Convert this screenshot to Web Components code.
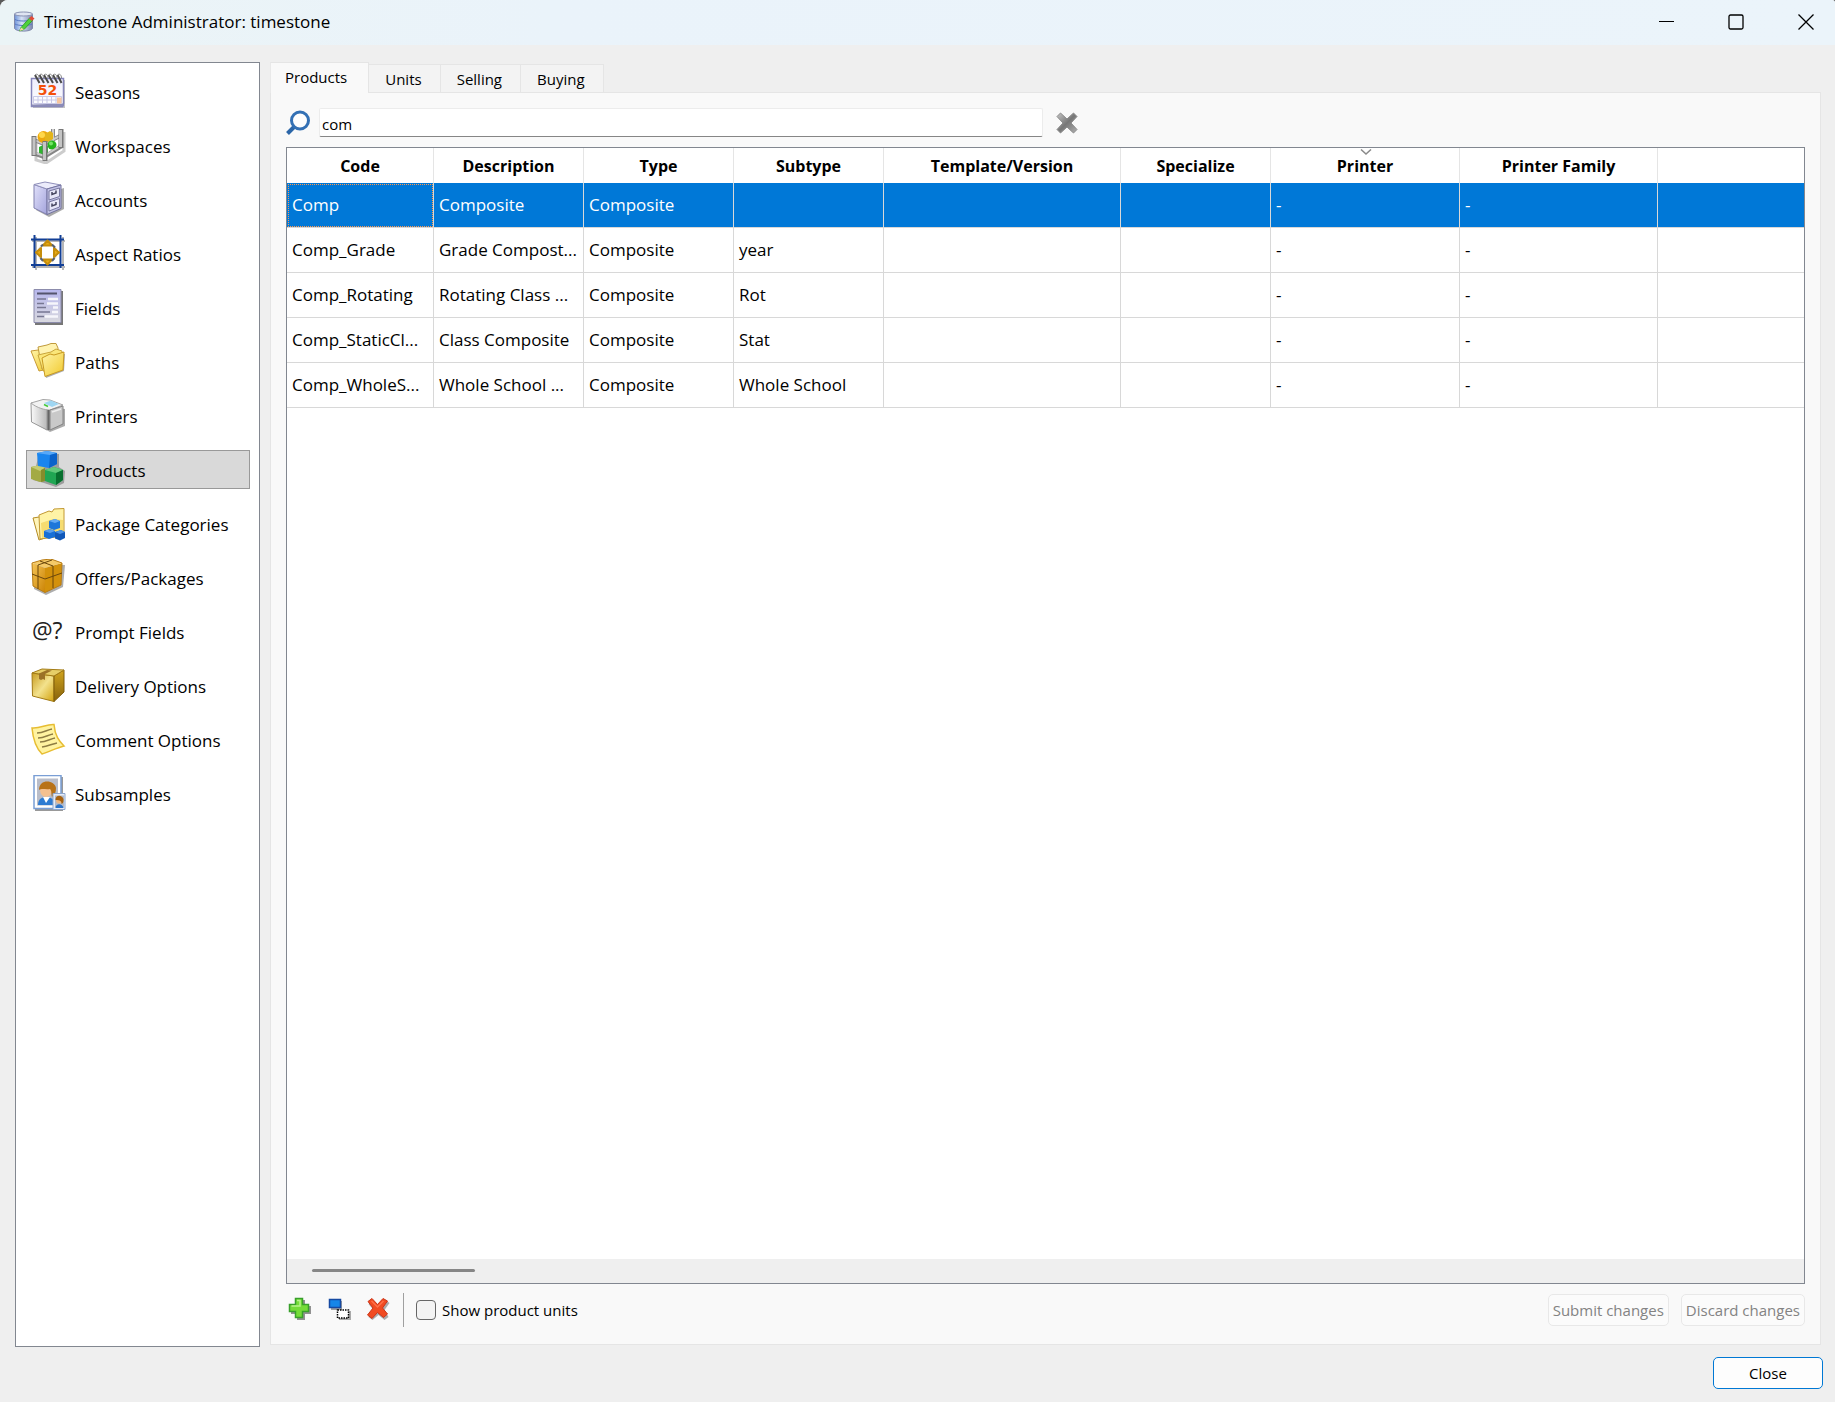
<!DOCTYPE html>
<html lang="en">
<head>
<meta charset="utf-8">
<title>Timestone Administrator: timestone</title>
<style>
    body {
        margin: 0;
        background: #5a5a5a;
        color: #000;
        font-family: "Open Sans", "Noto Sans", sans-serif;
        font-size: 17px;
    }
</style>
</head>
<body>

<admin-window>
    <title-bar slot="title">Timestone Administrator: timestone</title-bar>

    <nav-list slot="nav">
        <nav-item icon="seasons">Seasons</nav-item>
        <nav-item icon="workspaces">Workspaces</nav-item>
        <nav-item icon="accounts">Accounts</nav-item>
        <nav-item icon="aspect">Aspect Ratios</nav-item>
        <nav-item icon="fields">Fields</nav-item>
        <nav-item icon="paths">Paths</nav-item>
        <nav-item icon="printers">Printers</nav-item>
        <nav-item icon="products" selected>Products</nav-item>
        <nav-item icon="categories">Package Categories</nav-item>
        <nav-item icon="offers">Offers/Packages</nav-item>
        <nav-item icon="prompt">Prompt Fields</nav-item>
        <nav-item icon="delivery">Delivery Options</nav-item>
        <nav-item icon="comment">Comment Options</nav-item>
        <nav-item icon="subsamples">Subsamples</nav-item>
    </nav-list>

    <tab-panel tabs="Products,Units,Selling,Buying">
        <search-box value="com"></search-box>
        <product-table></product-table>
        <tool-bar></tool-bar>
    </tab-panel>

    <push-button slot="footer" variant="default">Close</push-button>
</admin-window>

<script>
const ICONS = {
    app: `<svg viewBox="0 0 22 22">
        <defs><linearGradient id="a" x2="1"><stop stop-color="#6f93d8"/><stop offset=".4" stop-color="#d5e2f6"/><stop offset="1" stop-color="#7b86ad"/></linearGradient></defs>
        <path d="M1.500 3v14.500c2 3.500 16 3.500 18 0V3z" fill="url(#a)" stroke="#8089ac"/>
        <ellipse cx="10.500" cy="3" rx="9" ry="2" fill="#dfe5f2" stroke="#8a92b2"/>
        <path d="M2 8.500c3 2 14 2 17 0M2 13c3 2 14 2 17 0" fill="none" stroke="#5577c4"/>
        <path d="M8 16.500L17 6.500l3 2.500-9 9.500-4.500 1.500z" fill="#4fd03c" stroke="#279a1e" stroke-width=".8"/>
        <path d="M16 7.500l2.500-2.500 3 2.500L19 10z" fill="#e34b38"/>
        <path d="M8 16.500l3 2-4.500 1.500z" fill="#f3d9a4"/></svg>`,
    seasons: `<svg viewBox="0 0 37 37">
        <defs><linearGradient id="a" x2="0" y2="1"><stop stop-color="#eeeefd"/><stop offset="1" stop-color="#fff"/></linearGradient></defs>
        <path d="M3 7h32v28H3z" fill="#aaa" opacity=".7"/>
        <path d="M1.500 5.500h32V30c0 2 0 3-1 3.500H1.500z" fill="url(#a)" stroke="#8585ba" stroke-width="1.500"/>
        <path d="M2 31.500l31-1v3H2z" fill="#8c8cb8"/>
        <path d="M3.500 23.500h28v7h-28zM3.500 27h28M8 23.500v7M12.500 23.500v7M17 23.500v7M21.500 23.500v7M26 23.500v7" fill="none" stroke="#c9c9e6"/>
        <path d="M27 24.500h4.500v6H27z" fill="#f8c59c"/>
        <path d="M5 2l4.500 8M9.500 2l4.500 8M14 2l4.500 8M18.500 2l4.500 8M23 2l4.500 8M27.500 2l4 8" stroke="#4a4a4a" stroke-width="2"/>
        <path d="M5 2c2-2 4 0 4 3M9.500 2c2-2 4 0 4 3M14 2c2-2 4 0 4 3M18.500 2c2-2 4 0 4 3M23 2c2-2 4 0 4 3M27.500 2c2-2 4 0 4 3" fill="none" stroke="#888"/>
        <text x="17.500" y="22" text-anchor="middle" font-family="DejaVu Sans, sans-serif" font-weight="700" font-size="14" fill="#f4500a">52</text></svg>`,
    workspaces: `<svg viewBox="0 0 37 37">
        <path d="M6 13v20l10 3 18-12V5" fill="none" stroke="#999" stroke-width="3" opacity=".5"/>
        <path d="M23 2v12M4 13l10 4 18-9" fill="none" stroke="#8a8a8a" stroke-width="4"/>
        <path d="M23 2v12M4 13l10 4 18-9" fill="none" stroke="#cdcdcd" stroke-width="2"/>
        <circle cx="13.500" cy="10" r="6" fill="#eda90c"/><circle cx="12" cy="8" r="3" fill="#ffd84a"/>
        <path d="M15 7l5-3 3 2v6l-5 3-3-2z" fill="#e3b51c"/>
        <path d="M9 20l6-3 3 2v7l-5 3-4-2z" fill="#2fb52f"/>
        <circle cx="22" cy="18" r="4.500" fill="#24b41c"/><circle cx="21" cy="16.500" r="2" fill="#74e566"/>
        <path d="M3 26l11 4 18-11" fill="none" stroke="#868686" stroke-width="4"/>
        <path d="M3 25l11 4 18-11" fill="none" stroke="#cbcbcb" stroke-width="2"/>
        <path d="M4 9v20M15 14v20M31 2v19" stroke="#777" stroke-width="5"/>
        <path d="M4 10v18M14.500 15v18M30.500 3v17" stroke="#c4c4c4" stroke-width="3"/></svg>`,
    accounts: `<svg viewBox="0 0 37 37">
        <defs><linearGradient id="a" x2="1" y2="1"><stop stop-color="#e1e1fa"/><stop offset="1" stop-color="#a3a3dc"/></linearGradient></defs>
        <path d="M18 12l16-5v21L19 36 6 29z" fill="#888" opacity=".7"/>
        <path d="M4 3.500L17 8v25.500L4 27z" fill="url(#a)" stroke="#8080ae"/>
        <path d="M4 3.500L15 1l16 3-14 4z" fill="#ececfb" stroke="#9090ba"/>
        <path d="M17 8l14-4v23.500l-14 6z" fill="#c1c1e5" stroke="#72729e"/>
        <path d="M19 10l10.500-3v8.500L19 19zM19 21l10.500-3.500v8.500L19 30z" fill="#e7e7f8" stroke="#77779f"/>
        <path d="M22 11v2.500l4-1.500V9.500M22 22.500V25l4-1.500V21" fill="none" stroke="#44445d" stroke-width="1.500"/></svg>`,
    aspect: `<svg viewBox="0 0 37 37">
        <path d="M6 2v33M33 2v33M2 6h33M2 32h33" stroke="#999" stroke-width="2" opacity=".7"/>
        <path d="M4.500 0v33M30.500 0v33M1 4.500h33M1 30h33" stroke="#123f96" stroke-width="2"/>
        <circle cx="17.500" cy="17.500" r="9" fill="none" stroke="#d7dbe5" stroke-width="2"/>
        <path d="M17.500 5.500l4.500 5h-9zM17.500 29.500l4.500-5h-9zM6 17.500L11 13v9zM29 17.500L24 13v9z" fill="#e9ab13" stroke="#c58d0b" stroke-width="2" stroke-linejoin="round"/>
        <path d="M11 11.500l2-2M22 9.500l3 3M24.500 23l-2.500 3M13 26l-2.500-3" stroke="#59616e" stroke-width="2"/></svg>`,
    fields: `<svg viewBox="0 0 37 37">
        <defs><linearGradient id="a" x2="0" y2="1"><stop stop-color="#b7b7ed"/><stop offset="1" stop-color="#d9d9df"/></linearGradient></defs>
        <path d="M5 2h28v34H5z" fill="#777"/>
        <path d="M4 .500h27v33H4z" fill="url(#a)" stroke="#8c8cac"/>
        <path d="M7 4.500h20" stroke="#54546d" stroke-width="2"/>
        <path d="M7 10h9M7 14.500h7M7 18.500h9M7 23h13M7 27.500h7" stroke="#777792" stroke-width="1.500"/>
        <path d="M18 10h10M17 14.500h11M23 18.500h5M22 23h6M15 27.500h13" stroke="#f6f6fb" stroke-width="2.500"/></svg>`,
    paths: `<svg viewBox="0 0 37 37">
        <defs><linearGradient id="a" x2="1" y2="1"><stop stop-color="#fff5ab"/><stop offset="1" stop-color="#f1c92c"/></linearGradient></defs>
        <path d="M12 12l23-1-1 17-18 7z" fill="#777" opacity=".6"/>
        <path d="M1 8l7-1 4 2 4-1 2 18-9 2z" fill="url(#a)" stroke="#c89a35"/>
        <path d="M8 4l9-2 4-1.500h5L28 5v20l-16 1z" fill="#fff3b0" stroke="#c09a3c"/>
        <path d="M8 12l13-3 5-3 6 2-1 16-18 4z" fill="#fae679" stroke="#c9a53c"/>
        <path d="M12 15l8-4 4 1 10-3-1 18-18 6.500z" fill="url(#a)" stroke="#c99a20"/></svg>`,
    printers: `<svg viewBox="0 0 37 37">
        <defs><linearGradient id="a" x2="1"><stop stop-color="#fafafa"/><stop offset="1" stop-color="#b9b9b9"/></linearGradient></defs>
        <path d="M3 8l32 4v17L20 35 4 26z" fill="#888" opacity=".7"/>
        <path d="M1 6l16 6v21L1.500 25z" fill="url(#a)" stroke="#999"/>
        <path d="M1 6l12-3.500L20 3l13 5-13 5c-5 0-13-2-19-7z" fill="#f2f2f2" stroke="#a5a5a5"/>
        <path d="M14 6l7-2.500 8 3.500-7 3z" fill="#9fd6f2"/>
        <path d="M14 7.500l4 2" stroke="#42c936" stroke-width="1.500"/>
        <path d="M20 13l13-4v18l-13 6z" fill="#c9c9c9" stroke="#848484"/>
        <path d="M18.500 13v20" stroke="#666" stroke-width="2"/>
        <path d="M22 15l9-3" stroke="#eee" stroke-width="1.500"/></svg>`,
    products: `<svg viewBox="0 0 37 37">
        <path d="M9 2l20 1v13l6 4-1 12-8 4-12-4-11-3z" fill="#555" opacity=".45"/>
        <path d="M1 16l9-2 5 3v13l-5 1-9-3z" fill="#a3aa45"/>
        <path d="M1 16l9-2 5 3-5 3z" fill="#c6cc72"/><path d="M11 19l4-2v13l-4 1z" fill="#858c2b"/>
        <path d="M7 2l10-2 10 2v11l-8 4-11-2z" fill="#1a85ee"/>
        <path d="M7 2l10-2 10 2-7 2z" fill="#58a8f8"/><path d="M20 4l7-2v11l-8 4z" fill="#0b62ca"/>
        <path d="M15 19l9-3 9 3v10l-7 5-11-4z" fill="#20a653"/>
        <path d="M15 19l9-3 9 3-7 3z" fill="#62c87c"/><path d="M26 22l7-3v10l-7 5z" fill="#08702f"/></svg>`,
    categories: `<svg viewBox="0 0 37 37">
        <path d="M3 13l6-1 3 2 3-2v21l-6 2z" fill="#fff5ba" stroke="#b48b23"/>
        <path d="M9 10l10-4 3 1 2-3 10-.500V31l-24 3z" fill="#fff3a6" stroke="#c29832"/>
        <path d="M11 18l12-4 10 1v15l-21 3z" fill="#f6dc70"/>
        <path d="M19 16l6-2 5 2v7l-6 2-5-2z" fill="#1d76da"/><path d="M19 16l6-2 5 2-5 2z" fill="#65aaf2"/>
        <path d="M14 26l6-2 5 2v6l-6 2-5-2z" fill="#176fd6"/><path d="M14 26l6-2 5 2-5 2z" fill="#5aa0ed"/>
        <path d="M25 27l6-2 4 2v6l-5 2.500-5-2z" fill="#1158b8"/><path d="M25 27l6-2 4 2-5 2z" fill="#4b93e5"/></svg>`,
    offers: `<svg viewBox="0 0 37 37">
        <defs><linearGradient id="a" x2="1" y2="1"><stop stop-color="#f6c557"/><stop offset="1" stop-color="#cb8405"/></linearGradient></defs>
        <path d="M4 4l31 2-2 22-17 8-12-6z" fill="#777" opacity=".6"/>
        <path d="M2 4l13 5v24.500L3 27z" fill="url(#a)"/><path d="M15 9l17-5-1 22-16 7.500z" fill="#d3910b"/>
        <path d="M2 4L12 1l9-1 11 4-17 5z" fill="#f5ca68"/>
        <path d="M2 4L12 1l9-1 11 4-1 22-16 7.500L3 27z" fill="none" stroke="#b87c14"/>
        <path d="M2 15l13 5 17-6M8 6v24M23 7v22M8 6l14-5M10 2l13 5" fill="none" stroke="#6b470b"/></svg>`,
    prompt: `<svg viewBox="0 0 37 37"><text x="2" y="26" font-family="Open Sans, sans-serif" font-size="23" fill="#222">@?</text></svg>`,
    delivery: `<svg viewBox="0 0 37 37">
        <defs><linearGradient id="a" x2="1" y2="1"><stop stop-color="#c89c20"/><stop offset=".5" stop-color="#f3e28d"/><stop offset="1" stop-color="#d2a10b"/></linearGradient><linearGradient id="b" x2="0" y2="1"><stop stop-color="#d1a51e"/><stop offset="1" stop-color="#87620c"/></linearGradient></defs>
        <path d="M2 6l22 3v25.500L2.500 29z" fill="url(#a)" stroke="#a37b15"/>
        <path d="M24 9l10-6v22l-10 9.500z" fill="url(#b)" stroke="#7f5d0d"/>
        <path d="M2 6l10-4 22 1-10 6z" fill="#e6ce68" stroke="#a37b15"/>
        <path d="M9 6.500l8-3.500 5 .500-7 3.500v6l-2-1-2 1-2-1z" fill="#9b7227"/></svg>`,
    comment: `<svg viewBox="0 0 37 37">
        <path d="M2 7c8 1 14-4 22-3.500C25 15 29 20 34 25c-8 2-15 6-22 8C6 27 3 18 2 7z" fill="#fff3a0" stroke="#e7bd32" stroke-width="1.500"/>
        <path d="M7 12c6 0 10-3 15-4M8 17c6 0 10-3 15-4M10 21c6 0 10-3 15-4M12 26c6-1 10-3 15-4" fill="none" stroke="#8d7c43" stroke-width="1.500"/></svg>`,
    subsamples: `<svg viewBox="0 0 37 37">
        <path d="M5 2h28v34H5z" fill="#999"/>
        <path d="M4 .500h27v33H4z" fill="#fff" stroke="#7a9ed5" stroke-width="1.500"/><path d="M7 3.500h21v27H7z" fill="#b9bdc9"/>
        <path d="M8 30c0-6 4-8 8-8s9 2 9 8z" fill="#2d7bd2"/><path d="M13 22l3 6 4-6z" fill="#fff"/>
        <ellipse cx="16" cy="15" rx="6" ry="7" fill="#f4c08f"/>
        <path d="M9 15c0-12 16-10 17-2 0 4-1 7-4 9-1-3 0-6-2-8-4 1-8-1-11 1z" fill="#b87217"/>
        <path d="M23 18.500h12v16H23z" fill="#e4ebf7" stroke="#8da7cf"/><path d="M25 20.500h9v12h-9z" fill="#b4bac7"/>
        <ellipse cx="29" cy="25" rx="3" ry="3.500" fill="#eeb57c"/><path d="M25.500 25c0-6 7-5 8-1 0 3 0 4-2 5 0-3-1-4-6-4z" fill="#a7620f"/>
        <path d="M25.500 33c0-5 7-5 8 0z" fill="#2d75ca"/></svg>`,
    search: `<svg viewBox="0 0 24 26">
        <path d="M9 16L1.500 23.500" stroke="#2b66a8" stroke-width="4"/>
        <circle cx="14" cy="10.500" r="8.500" fill="#fdfdfd" stroke="#3370b4" stroke-width="3"/></svg>`,
    clear: `<svg viewBox="0 0 22 22">
        <defs><linearGradient id="a" x2="1" y2="1"><stop stop-color="#c6c6c6"/><stop offset=".5" stop-color="#777"/><stop offset="1" stop-color="#b0b0b0"/></linearGradient></defs>
        <path d="M4.500 1L11 7l6.500-6L21 4.500 15 11l6 6.500-3.500 3.500L11 15l-6.500 6L1 17.500 7 11 1 4.500z" fill="url(#a)" stroke="#8a8a8a"/></svg>`,
    add: `<svg viewBox="0 0 24 24">
        <path d="M9 3h8v6h6v8h-6v6H9v-6H3V9h6z" fill="#666" opacity=".7"/>
        <path d="M7.500 1.500h7v6h6v7h-6v6h-7v-6h-6v-7h6z" fill="#75dc38" stroke="#38a02b" stroke-width="1.500"/>
        <path d="M9 3.500h3v5.500H3.500" fill="none" stroke="#b7f28a" stroke-width="1.500"/></svg>`,
    duplicate: `<svg viewBox="0 0 24 24">
        <path d="M4 4h11v9H4z" fill="#777" opacity=".7"/><path d="M2.500 2.500h11v8h-11z" fill="#1686e8" stroke="#164aa2" stroke-width="1.500"/>
        <path d="M12 14h12v9H12z" fill="#aaa"/><path d="M10.500 13h11v8h-11z" fill="#fff" stroke="#000" stroke-width="1.500" stroke-dasharray="1.500 1"/></svg>`,
    remove: `<svg viewBox="0 0 24 24">
        <path d="M6.500 3l7 6 6-6 4 3-5 7 4 7-4 3-6-5-6 5-4-3 5-7-5-6z" fill="#777" opacity=".6"/>
        <path d="M6 1.500l5.500 6 5.500-6 4.500 2.500-5 7 5 6-4 3.500-6-5-5.500 6L1.500 18l5.500-7L2 4.500z" fill="#f14b21" stroke="#cc3518" stroke-linejoin="round"/>
        <path d="M5.500 4l6 6 6-6" fill="none" stroke="#ff7048" stroke-width="1.500"/></svg>`,
    sort: `<svg viewBox="0 0 12 6"><path d="M1 .500l5 4.500 5-4.500" fill="none" stroke="#8a8a8a" stroke-width="1.500"/></svg>`,
    minimize: `<svg viewBox="0 0 16 16"><path d="M1 7.500h15" stroke="#000"/></svg>`,
    maximize: `<svg viewBox="0 0 16 16"><rect x="1" y="1" width="14" height="14" rx="1.500" fill="none" stroke="#000" stroke-width="1.300"/></svg>`,
    close: `<svg viewBox="0 0 16 16"><path d="M.500 .500l15 15M15.500 .500l-15 15" stroke="#000" stroke-width="1.300"/></svg>`
};

const COLUMNS = [
    ['Code', 147], ['Description', 150], ['Type', 150], ['Subtype', 150],
    ['Template/Version', 237], ['Specialize', 150], ['Printer', 189], ['Printer Family', 198], ['', 0]
];

const ROWS = [
    ['Comp', 'Composite', 'Composite', '', '', '', '-', '-', ''],
    ['Comp_Grade', 'Grade Compost...', 'Composite', 'year', '', '', '-', '-', ''],
    ['Comp_Rotating', 'Rotating Class ...', 'Composite', 'Rot', '', '', '-', '-', ''],
    ['Comp_StaticCl...', 'Class Composite', 'Composite', 'Stat', '', '', '-', '-', ''],
    ['Comp_WholeS...', 'Whole School ...', 'Composite', 'Whole School', '', '', '-', '-', '']
];

class BaseElement extends HTMLElement {
    connectedCallback() {
        if (this.shadowRoot) {
            return;
        }
        const shadowRoot = this.attachShadow({ mode: 'open' });
        shadowRoot.innerHTML = `<style>* { box-sizing: border-box; }</style>${this.render()}`;
    }
}

class UiIcon extends BaseElement {
    render() {
        return `
            <style>
                :host { display: block; flex: none; }
                svg { display: block; width: 100%; height: 100%; }
            </style>
            ${ICONS[this.getAttribute('name')]}`;
    }
}

class AdminWindow extends BaseElement {
    render() {
        return `
            <style>
                :host { display: flex; flex-direction: column; min-height: 100vh; background: #efefef; border-radius: 8px 3px 0 0; overflow: hidden; }
                main { flex: 1; display: flex; gap: 10px; padding: 17px 14px 0 15px; }
                footer { display: flex; justify-content: flex-end; padding: 10px 12px 13px; }
            </style>
            <slot name="title"></slot>
            <main><slot name="nav"></slot><slot></slot></main>
            <footer><slot name="footer"></slot></footer>`;
    }
}

class TitleBar extends BaseElement {
    render() {
        return `
            <style>
                :host { display: flex; align-items: center; height: 45px; background: linear-gradient(90deg, #ebf4f6, #eaf3fa 30%, #ebf4fa); }
                .app { width: 22px; height: 22px; margin: 0 9px 2px 13px; }
                h1 { flex: 1; margin: 0; padding-bottom: 2px; font-size: 17px; line-height: 24px; font-weight: 400; }
                .controls { display: flex; gap: 12px; }
                button { display: flex; align-items: center; justify-content: center; width: 58px; height: 45px; padding: 0 0 2px; border: 0; background: none; }
                button ui-icon { width: 16px; height: 16px; }
            </style>
            <ui-icon class="app" name="app"></ui-icon>
            <h1><slot></slot></h1>
            <div class="controls">
                <button aria-label="Minimize"><ui-icon name="minimize"></ui-icon></button>
                <button aria-label="Maximize"><ui-icon name="maximize"></ui-icon></button>
                <button aria-label="Close window"><ui-icon name="close"></ui-icon></button>
            </div>`;
    }
}

class NavList extends BaseElement {
    render() {
        return `
            <style>
                :host { display: block; flex: none; width: 245px; background: #fff; border: 1px solid #828790; box-sizing: border-box; }
                nav { display: flex; flex-direction: column; gap: 15px; padding: 9px 9px 9px 10px; }
            </style>
            <nav><slot></slot></nav>`;
    }
}

class NavItem extends BaseElement {
    render() {
        return `
            <style>
                :host { display: block; }
                button { display: flex; align-items: center; gap: 8px; width: 100%; height: 39px; padding: 0 3px; border: 1px solid transparent; background: none; font: inherit; color: #000; text-align: left; white-space: nowrap; }
                :host([selected]) button { background: #d9d9d9; border-color: #999; }
                ui-icon { width: 37px; height: 37px; }
                span { padding-top: 1px; }
            </style>
            <button><ui-icon name="${this.getAttribute('icon')}"></ui-icon><span><slot></slot></span></button>`;
    }
}

class TabPanel extends BaseElement {
    render() {
        const tabs = this.getAttribute('tabs').split(',')
            .map((tab, i) => `<button role="tab" aria-selected="${i === 0}">${tab}</button>`)
            .join('');

        return `
            <style>
                :host { display: flex; flex-direction: column; flex: 1; min-width: 0; padding-bottom: 2px; box-sizing: border-box; }
                .tabs { display: flex; align-items: flex-end; }
                button { height: 28px; padding: 0 18px 0 16px; border: 1px solid #e5e5e5; border-left: 0; border-bottom: 0; background: #f3f3f3; font: inherit; font-size: 15px; color: #000; }
                button[aria-selected="true"] { height: 31px; margin-bottom: -1px; padding: 0 21px 2px 14px; border-left: 1px solid #e9e9e9; background: #f9f9f9; position: relative; }
                .pane { flex: 1; display: flex; flex-direction: column; padding: 15px 15px 17px; border: 1px solid #e5e5e5; background: #f9f9f9; }
            </style>
            <div class="tabs" role="tablist">${tabs}</div>
            <div class="pane" role="tabpanel"><slot></slot></div>`;
    }
}

class SearchBox extends BaseElement {
    render() {
        return `
            <style>
                :host { display: flex; align-items: center; margin-bottom: 10px; }
                .lens { width: 24px; height: 26px; margin-right: 9px; }
                input { flex: 1; min-width: 0; max-width: 724px; height: 29px; padding: 2px 2px 0; border: 1px solid #ececec; border-bottom: 1px solid #868686; border-radius: 2px; background: #fff; font: inherit; font-size: 15px; color: #000; outline: 0; }
                button { width: 22px; height: 22px; margin-left: 13px; padding: 0; border: 0; background: none; }
            </style>
            <ui-icon class="lens" name="search"></ui-icon>
            <input type="text" aria-label="Search products" value="${this.getAttribute('value')}">
            <button aria-label="Clear search"><ui-icon name="clear"></ui-icon></button>`;
    }
}

class ProductTable extends BaseElement {
    render() {
        const cols = COLUMNS.map(([, width]) => `<col${width ? ` style="width: ${width}px"` : ''}>`).join('');
        const head = COLUMNS.map(([name]) => {
            const sort = name === 'Printer' ? '<ui-icon name="sort"></ui-icon>' : '';
            return `<th scope="col">${sort}${name}</th>`;
        }).join('');
        const body = ROWS.map((row, i) => `<tr${i === 0 ? ' class="selected"' : ''}>${row.map((cell) => `<td>${cell}</td>`).join('')}</tr>`).join('');

        return `
            <style>
                :host { flex: 1; display: flex; flex-direction: column; border: 1px solid #828790; background: #fff; box-sizing: border-box; }
                .view { flex: 1; overflow: hidden; }
                table { width: 100%; table-layout: fixed; border-collapse: separate; border-spacing: 0; font-size: 17px; }
                th { position: relative; height: 35px; padding: 0; border-right: 1px solid #e5e5e5; font-size: 16px; font-weight: 700; line-height: 22px; }
                td { height: 45px; padding: 0 0 0 5px; border-right: 1px solid #d8d8d8; border-bottom: 1px solid #d8d8d8; line-height: 22px; white-space: nowrap; overflow: hidden; }
                th:last-child, td:last-child { border-right: 0; }
                .selected td { background: #0078d7; color: #fff; }
                .selected td:first-child { outline: 1px dotted #ff9a50; outline-offset: -2px; }
                th ui-icon { position: absolute; top: 1px; left: 50%; width: 12px; height: 6px; margin-left: -5px; }
                .scroll { height: 24px; padding: 10px 25px; background: #efefef; }
                .thumb { width: 163px; height: 3px; border-radius: 2px; background: #868686; }
            </style>
            <div class="view">
                <table>
                    <colgroup>${cols}</colgroup>
                    <thead><tr>${head}</tr></thead>
                    <tbody>${body}</tbody>
                </table>
            </div>
            <div class="scroll"><div class="thumb"></div></div>`;
    }
}

class ToolBar extends BaseElement {
    render() {
        return `
            <style>
                :host { display: flex; align-items: center; height: 34px; margin-top: 9px; }
                .actions { display: flex; gap: 15px; padding-left: 2px; }
                .actions button { width: 24px; height: 24px; margin-bottom: 2px; padding: 0; border: 0; background: none; }
                .rule { width: 1px; height: 34px; margin: 0 12px 0 13px; background: #a0a0a0; }
                label { display: flex; align-items: center; gap: 6px; font-size: 15px; line-height: 20px; }
                input { appearance: none; width: 20px; height: 20px; margin: 0; border: 1px solid #666; border-radius: 4px; background: #f3f3f3; }
                .changes { display: flex; gap: 12px; margin-left: auto; }
            </style>
            <div class="actions">
                <button aria-label="Add"><ui-icon name="add"></ui-icon></button>
                <button aria-label="Duplicate"><ui-icon name="duplicate"></ui-icon></button>
                <button aria-label="Delete"><ui-icon name="remove"></ui-icon></button>
            </div>
            <div class="rule"></div>
            <label><input type="checkbox">Show product units</label>
            <div class="changes">
                <push-button disabled>Submit changes</push-button>
                <push-button disabled>Discard changes</push-button>
            </div>`;
    }
}

class PushButton extends BaseElement {
    render() {
        return `
            <style>
                :host { display: block; }
                button { height: 32px; padding: 0 4px; border: 1px solid #e8e8e8; border-radius: 5px; background: #fbfbfb; font: inherit; font-size: 15px; color: #000; }
                button:disabled { color: #838383; }
                :host([variant="default"]) button { width: 110px; border-color: #0078d4; background: #fdfdfd; }
            </style>
            <button${this.hasAttribute('disabled') ? ' disabled' : ''}><slot></slot></button>`;
    }
}

window.customElements.define('ui-icon', UiIcon);
window.customElements.define('admin-window', AdminWindow);
window.customElements.define('title-bar', TitleBar);
window.customElements.define('nav-list', NavList);
window.customElements.define('nav-item', NavItem);
window.customElements.define('tab-panel', TabPanel);
window.customElements.define('search-box', SearchBox);
window.customElements.define('product-table', ProductTable);
window.customElements.define('tool-bar', ToolBar);
window.customElements.define('push-button', PushButton);
</script>
</body>
</html>
